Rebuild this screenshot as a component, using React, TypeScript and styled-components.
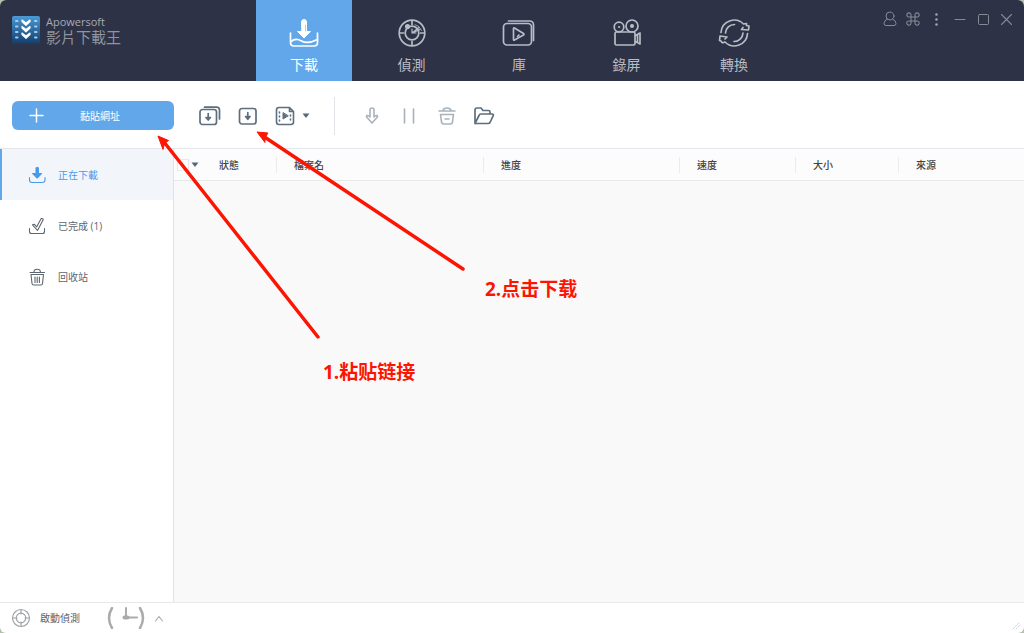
import React from "react";
import styled, { createGlobalStyle } from "styled-components";

const SANS = `"Open Sans", "Noto Sans CJK TC", sans-serif`;

const GlobalStyle = createGlobalStyle`
  * { box-sizing: border-box; }
  body { margin: 0; background: #b3c2a6; font-family: ${SANS}; }
  button { border: 0; padding: 0; background: none; font-family: inherit; cursor: pointer; }
  svg { display: block; flex: none; }
`;

const Window = styled.div`
  position: relative;
  display: flex;
  flex-direction: column;
  min-height: 100vh;
  overflow: hidden;
  border-radius: 6px;
  background: #fff;
`;

const Header = styled.header`
  display: flex;
  height: 81px;
  background: #2d3246;
`;

const Brand = styled.div`
  display: flex;
  flex: none;
  width: 256px;
  gap: 6px;
  padding: 14px 0 0 12px;
`;

const BrandText = styled.div`
  color: #a6abb5;
`;

const BrandName = styled.div`
  font-size: 11px;
  line-height: 16px;
`;

const ProductName = styled.h1`
  margin: 0;
  color: #8f949e;
  font-size: 15px;
  font-weight: 400;
  line-height: 14px;
`;

const Nav = styled.nav`
  display: flex;
  flex: none;
  width: 526px;
  justify-content: space-between;
`;

const NavTab = styled.button<{ $active?: boolean }>`
  display: flex;
  flex-direction: column;
  align-items: center;
  width: 96px;
  gap: 4px;
  padding-top: 16px;
  background: ${(p) => (p.$active ? "#62a7ea" : "transparent")};
  color: ${(p) => (p.$active ? "#fff" : "#b8bcc5")};
  font-size: 14px;
  line-height: 20px;
`;

const WindowControls = styled.div`
  display: grid;
  grid-template-columns: repeat(6, 1fr);
  width: 141px;
  height: 38px;
  margin: 0 5px 0 auto;
`;

const ControlButton = styled.button`
  display: flex;
  align-items: center;
  justify-content: center;
  color: #858a95;
`;

const Toolbar = styled.div`
  display: flex;
  align-items: center;
  height: 68px;
  padding: 2px 12px 0;
  border-bottom: 1px solid #e3e7eb;
`;

const PasteButton = styled.button`
  display: flex;
  align-items: center;
  width: 162px;
  height: 29px;
  gap: 36px;
  padding-left: 17px;
  border-radius: 6px;
  background: #62a7ea;
  color: #fff;
  font-size: 10px;
  line-height: 14px;
`;

const ToolGroup = styled.div<{ $gap: number; $start: number }>`
  display: flex;
  align-items: center;
  gap: ${(p) => p.$gap}px;
  margin-left: ${(p) => p.$start}px;
`;

const ToolButton = styled.button<{ $muted?: boolean }>`
  display: flex;
  justify-content: center;
  width: 24px;
  color: ${(p) => (p.$muted ? "#a9b2bb" : "#5d6f7f")};
`;

const CaretButton = styled.button`
  display: flex;
  justify-content: center;
  width: 16px;
  color: #56697a;
`;

const ToolDivider = styled.span`
  width: 1px;
  height: 38px;
  margin-left: 20px;
  background: #e1e5e9;
`;

const Body = styled.div`
  display: flex;
  flex: 1;
`;

const Sidebar = styled.aside`
  flex: none;
  width: 174px;
  border-right: 1px solid #dfe3e7;
`;

const SideItem = styled.button<{ $active?: boolean }>`
  display: flex;
  align-items: center;
  width: 100%;
  height: 51px;
  gap: 12px;
  padding-left: 26px;
  border-left: 2px solid ${(p) => (p.$active ? "#62a7ea" : "transparent")};
  background: ${(p) => (p.$active ? "#f2f6fa" : "transparent")};
  color: ${(p) => (p.$active ? "#4a9aea" : "#5c6670")};
  font-size: 10px;
  line-height: 14px;
`;

const Content = styled.main`
  flex: 1;
  min-width: 0;
  background: #f9f9f9;
`;

const Table = styled.table`
  width: 100%;
  border-collapse: separate;
  border-spacing: 0;
  table-layout: fixed;
  background: #fcfcfc;
`;

const HeadCell = styled.th<{ $width?: number }>`
  width: ${(p) => (p.$width ? `${p.$width}px` : "auto")};
  height: 32px;
  padding: 0;
  border-bottom: 1px solid #e6e8ea;
  color: #444;
  font-size: 10px;
  font-weight: 500;
  line-height: 16px;
  text-align: left;
`;

const HeadLabel = styled.span<{ $divided?: boolean }>`
  display: block;
  padding-left: 17px;
  border-left: 1px solid ${(p) => (p.$divided ? "#e9ebed" : "transparent")};
`;

const SelectAll = styled.div`
  display: flex;
  align-items: center;
  gap: 2px;
  padding-left: 3px;
`;

const CheckBox = styled.input`
  appearance: none;
  flex: none;
  width: 12px;
  height: 12px;
  margin: 0;
  border: 1px solid #e6e9ed;
  background: #fff;
`;

const SelectMenuButton = styled.button`
  color: #56697a;
`;

const Footer = styled.footer`
  display: flex;
  align-items: center;
  height: 31px;
  padding: 0 2px 0 11px;
  border-top: 1px solid #e6e8ea;
`;

const DetectButton = styled.button`
  display: flex;
  align-items: center;
  width: 96px;
  gap: 9px;
  color: #5c6670;
  font-size: 10px;
  line-height: 14px;
`;

const DetectIcon = styled.span`
  color: #a0a3a6;
`;

const FooterButton = styled.button`
  display: flex;
  justify-content: center;
  color: #a9abad;
`;

const Grip = styled.span`
  align-self: flex-end;
  margin-left: auto;
  padding-bottom: 2px;
  color: #c7cfdc;
`;

const Arrows = styled.svg`
  position: absolute;
  top: 0;
  left: 0;
  pointer-events: none;
`;

const Note = styled.p<{ $x: number; $y: number }>`
  position: absolute;
  top: ${(p) => p.$y}px;
  left: ${(p) => p.$x}px;
  margin: 0;
  color: #fd1503;
  font-family: "Open Sans", "Noto Sans CJK SC", sans-serif;
  font-size: 19px;
  font-weight: 700;
  line-height: 24px;
  white-space: nowrap;
`;

const Icon = ({
  size = 24,
  h,
  sw = 1.5,
  children,
}: {
  size?: number;
  h?: number;
  sw?: number;
  children: React.ReactNode;
}) => (
  <svg
    width={size}
    height={h ?? size}
    viewBox={`0 0 ${size} ${h ?? size}`}
    fill="none"
    stroke="currentColor"
    strokeWidth={sw}
    strokeLinecap="round"
    strokeLinejoin="round"
    aria-hidden="true"
  >
    {children}
  </svg>
);

const Caret = () => (
  <svg width="8" height="6" viewBox="0 0 8 6" aria-hidden="true">
    <path d="M.5 .5h7L4 5z" fill="currentColor" />
  </svg>
);

const Logo = () => (
  <svg width="28" height="30" viewBox="0 0 28 30" aria-hidden="true">
    <defs>
      <linearGradient id="logo" x1="0" y1="0" x2="0" y2="1">
        <stop offset="0" stopColor="#4a9bd6" />
        <stop offset="1" stopColor="#123c6b" />
      </linearGradient>
    </defs>
    <rect y="2" width="28" height="28" rx="2" fill="url(#logo)" />
    {[6, 11.5, 17, 22.5].map((y) => (
      <g key={y} fill="#a9cdea">
        <rect x="3" y={y} width="3.5" height="2" rx="1" />
        <rect x="22" y={y} width="3.5" height="2" rx="1" />
      </g>
    ))}
    <path
      d="M10 6v1.500l4 3.800 4-3.800V6l-4 3zM10 12.500V14l4 3.800 4-3.800v-1.500l-4 3zM10 19v1.500l4 3.800 4-3.800V19l-4 3z"
      fill="#fff"
      stroke="#fff"
      strokeWidth="1.200"
      strokeLinejoin="round"
    />
  </svg>
);

const navItems = [
  {
    label: "下載",
    icon: (
      <>
        <path d="M3.500 17v9.500q0 3.500 3.500 3.500h20q3.500 0 3.500-3.500V17" />
        <path d="M4 25.500c3-2.500 7-2.500 10.500-.500s8 2.500 16-1.500" />
        <path d="M14.500 6q0-2.500 2.500-2.500t2.500 2.500v9.500h4L17 22l-6.500-6.500h4z" fill="currentColor" strokeWidth="1" />
        <path d="M18.500 9v6" stroke="#a9d0f5" strokeWidth="1" />
      </>
    ),
  },
  {
    label: "偵測",
    icon: (
      <>
        <circle cx="17" cy="17" r="12.800" />
        <circle cx="17" cy="17" r="6.800" />
        <path d="M17 5v3.500M17 25.500V29M5 17h3.500M25.500 17H29" />
        <path d="M17 17l7-5.500M17 17l8-3.500M17 13v4h4" strokeWidth="1.200" />
        <circle cx="12.500" cy="10.500" r="1.700" fill="currentColor" />
        <path d="M20 8.500a9.500 9.500 0 0 1 6.500 6" strokeWidth=".8" />
      </>
    ),
  },
  {
    label: "庫",
    icon: (
      <>
        <rect x="1.500" y="7.500" width="28" height="21.500" rx="3.500" />
        <path d="M6.500 5h21q4 0 4 4v15.500" />
        <path d="M11.500 12.500v11q0 1 1 .500l9-5q1-.800 0-1.500l-9-5.500q-1-.400-1 .500z" />
        <path d="M15.500 20.500l1.500-1.500" />
      </>
    ),
  },
  {
    label: "錄屏",
    icon: (
      <>
        <rect x="5" y="16" width="20" height="13" rx="1.500" />
        <circle cx="9" cy="11" r="4.800" />
        <circle cx="22" cy="10" r="6" />
        <circle cx="22" cy="10" r="1.200" fill="currentColor" />
        <circle cx="9" cy="11" r=".600" fill="currentColor" strokeWidth="1" />
        <path d="M25.500 19.500l4.500-2.500v11l-4.500-2.500M27.500 19v7" />
      </>
    ),
  },
  {
    label: "轉換",
    icon: (
      <>
        <path d="M4 16.500A13.200 13.200 0 0 1 26.500 8q1.500-.500 3-.500v2l2.500.500-.500 4-7-.500 1.500-2" />
        <path d="M30.500 17.500A13.200 13.200 0 0 1 8 26q-1.500 1-3 .500L4 25l-1.500-.500.500-4.500 7 1-2 2" />
        <path d="M8.500 17a9 9 0 0 1 9-8.500M26 17a9 9 0 0 1-9 8.500" />
      </>
    ),
  },
];

const columns = [
  { label: "狀態", width: 75 },
  { label: "檔案名", width: 207 },
  { label: "進度", width: 196 },
  { label: "速度", width: 116 },
  { label: "大小", width: 103 },
  { label: "來源", width: undefined },
];

const sideItems = [
  {
    label: "正在下載",
    icon: (
      <>
        <path d="M1.500 11.500v2.500q0 2.500 2.500 2.500h10.500q2.500 0 2.500-2.500v-2.500" />
        <path d="M8 2.500q0-1.300 1.200-1.300t1.200 1.300v5h3.100L9.200 12 4.700 7.500H8z" fill="currentColor" />
      </>
    ),
  },
  {
    label: "已完成 (1)",
    icon: (
      <>
        <path d="M1.500 11.500v3q0 2 2 2h11q2 0 2-2v-3" />
        <path d="M4.500 7.800l1.700-.600 2.500 2.600 4.500-8.300q2-.200 2 1.200L9.500 13.500z" />
      </>
    ),
  },
  {
    label: "回收站",
    icon: (
      <>
        <path d="M2 4.500h14.500M6 4q0-2.800 3.200-2.800T12.400 4M3 6.500l1 9q.200 1.500 1.500 1.500h7.500q1.300 0 1.500-1.500l1-9zM7 9v5.500M9.200 9v5.500M11.400 9v5.500" />
      </>
    ),
  },
];

export default function App() {
  return (
    <>
      <GlobalStyle />
      <Window>
        <Header>
          <Brand>
            <Logo />
            <BrandText>
              <BrandName>Apowersoft</BrandName>
              <ProductName>影片下載王</ProductName>
            </BrandText>
          </Brand>
          <Nav>
            {navItems.map((item, i) => (
              <NavTab key={item.label} $active={i === 0}>
                <Icon size={34} h={35} sw={1.7}>{item.icon}</Icon>
                {item.label}
              </NavTab>
            ))}
          </Nav>
          <WindowControls>
            <ControlButton aria-label="Account">
              <Icon size={16} sw={1}>
                <circle cx="8" cy="5" r="4" />
                <path d="M5.300 8Q2 9.500 2 12.500q0 2 2 2h8q2 0 2-2Q14 9.500 10.700 8" />
              </Icon>
            </ControlButton>
            <ControlButton aria-label="Shortcuts">
              <Icon size={16} sw={1.100}>
                <path d="M6 6v4h4V6zM6 6H4.300A2.100 2.100 0 1 1 6 4zM10 6V4a2.100 2.100 0 1 1 1.700 2zM6 10v2a2.100 2.100 0 1 1-1.700-2zM10 10h1.700a2.100 2.100 0 1 1-1.700 2z" />
              </Icon>
            </ControlButton>
            <ControlButton aria-label="Menu">
              <Icon size={16} sw={0}>
                <g fill="#a0a4ad">
                  <circle cx="7.500" cy="3.500" r="1.300" />
                  <circle cx="7.500" cy="8.500" r="1.300" />
                  <circle cx="7.500" cy="13.500" r="1.300" />
                </g>
              </Icon>
            </ControlButton>
            <ControlButton aria-label="Minimize">
              <Icon size={16} sw={1}><path d="M3 8.500h10" /></Icon>
            </ControlButton>
            <ControlButton aria-label="Maximize">
              <Icon size={16} sw={1}><rect x="2.500" y="3.500" width="10" height="10" rx="1" /></Icon>
            </ControlButton>
            <ControlButton aria-label="Close">
              <Icon size={16} sw={1.100}><path d="M2.500 3.500l10 10M12.500 3.500l-10 10" /></Icon>
            </ControlButton>
          </WindowControls>
        </Header>

        <Toolbar>
          <PasteButton>
            <Icon size={15} sw={1.500}><path d="M7.500 1v13M1 7.500h13" /></Icon>
            黏貼網址
          </PasteButton>
          <ToolGroup $gap={14} $start={24}>
            <ToolButton aria-label="Batch download">
              <Icon sw={1.700}>
                <rect x="2" y="5.500" width="16.500" height="15" rx="2.500" />
                <path d="M6.500 3.200h12q3 0 3 3V15" />
                <path d="M10.200 9.500v5.500M8 13.500l2.200 2.500 2.200-2.500z" fill="currentColor" />
              </Icon>
            </ToolButton>
            <ToolButton aria-label="Download">
              <Icon sw={1.700}>
                <rect x="3.500" y="4.500" width="16.500" height="15.500" rx="2.500" />
                <path d="M11.800 8.500v6M9.600 12.500l2.200 2.800 2.200-2.800z" fill="currentColor" />
              </Icon>
            </ToolButton>
            <ToolButton aria-label="Download and convert">
              <Icon sw={1.600}>
                <path d="M5 3.500h10.500l4 4V18q0 2.500-2.500 2.500H5Q2.500 20.500 2.500 18V6Q2.500 3.500 5 3.500zM15.500 3.500v4h4" />
                <path d="M5.500 8v10M16.500 11v7" strokeDasharray="1 3" />
                <path d="M9 9v6l5-3z" fill="currentColor" strokeWidth="1" />
              </Icon>
            </ToolButton>
          </ToolGroup>
          <CaretButton aria-label="Format options"><Caret /></CaretButton>
          <ToolDivider />
          <ToolGroup $gap={13} $start={25}>
            <ToolButton $muted aria-label="Start">
              <Icon sw={1.600}><path d="M10 6q0-2 2-2t2 2v7q.500-1.500 3-1.500 1 .500 0 2L12 19l-5-5.500q-1-1.500 0-2 2.500 0 3 1.500z" /></Icon>
            </ToolButton>
            <ToolButton $muted aria-label="Pause">
              <Icon sw={1.600}><path d="M7.500 5v14M16.500 5v14" /></Icon>
            </ToolButton>
            <ToolButton $muted aria-label="Delete">
              <Icon sw={1.600}><path d="M5 7h16M9 6.500q.500-2.500 4-2.500t4 2.500M6.500 10.500l1 7.500q.400 2 2 2h7q1.600 0 2-2l1-7.500zM11 15h4" /></Icon>
            </ToolButton>
            <ToolButton aria-label="Open folder">
              <Icon sw={1.700}>
                <path d="M4 19.500V6q0-2 2-2h4l2 2.500h5.500q1.500 0 1.500 1.500v2M4 19.500l4-8q.500-1.500 2-1.500h11q2 0 1.200 1.700L19 18.500q-.500 1-2 1H5q-1 0-1-1" />
              </Icon>
            </ToolButton>
          </ToolGroup>
        </Toolbar>

        <Body>
          <Sidebar>
            {sideItems.map((item, i) => (
              <SideItem key={item.label} $active={i === 0}>
                <Icon size={18} sw={1.100}>{item.icon}</Icon>
                {item.label}
              </SideItem>
            ))}
          </Sidebar>
          <Content>
            <Table>
              <thead>
                <tr>
                  <HeadCell $width={27}>
                    <SelectAll>
                      <CheckBox type="checkbox" aria-label="Select all" />
                      <SelectMenuButton aria-label="Selection options"><Caret /></SelectMenuButton>
                    </SelectAll>
                  </HeadCell>
                  {columns.map((column, i) => (
                    <HeadCell key={column.label} $width={column.width} scope="col">
                      <HeadLabel $divided={i > 0}>{column.label}</HeadLabel>
                    </HeadCell>
                  ))}
                </tr>
              </thead>
            </Table>
          </Content>
        </Body>

        <Footer>
          <DetectButton>
            <DetectIcon>
              <Icon size={20} sw={1.200}>
                <circle cx="10" cy="10" r="8.500" />
                <circle cx="10" cy="10" r="4.800" />
                <path d="M10 2v4M10 14v4M2 10h4M14 10h4" />
              </Icon>
            </DetectIcon>
            啟動偵測
          </DetectButton>
          <FooterButton aria-label="Schedule">
            <Icon size={38} h={22} sw={2}>
              <path d="M5 1q-6 10 0 20M33 1q6 10 0 20" strokeWidth="2.500" />
              <path d="M19 1v9.500h11" />
              <path d="M17.500 10.500h3" strokeWidth="4" />
            </Icon>
          </FooterButton>
          <FooterButton aria-label="Expand">
            <Icon size={28} h={12} sw={1.100}><path d="M10.500 9L14 4.500 17.500 9" /></Icon>
          </FooterButton>
          <Grip>
            <Icon size={10} sw={1}><path d="M1 8l6-6M4 8l4-4" strokeDasharray="1 1.500" /></Icon>
          </Grip>
        </Footer>

        <Arrows width="480" height="350" viewBox="0 0 480 350" fill="#fd1503" stroke="#fd1503" aria-hidden="true">
          <path d="M164 142L318 337M263 136L463 269" strokeWidth="3.500" strokeLinecap="round" />
          <path d="M158 136l10.500 4.500-4 3-1.500 6zM257 132l11 1-3 4.500v5z" strokeWidth="1" />
        </Arrows>
        <Note $x={323} $y={360}>1.粘贴链接</Note>
        <Note $x={485} $y={277}>2.点击下载</Note>
      </Window>
    </>
  );
}
